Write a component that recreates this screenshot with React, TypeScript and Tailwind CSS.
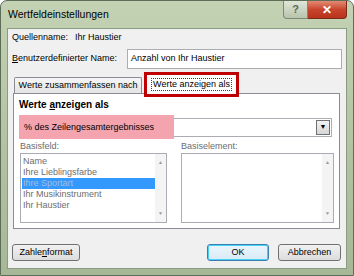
import React from 'react';

const font = { fontFamily: '"Liberation Sans", Arial, sans-serif' };

const ListBox: React.FC<{ items: string[]; selected?: number }> = ({ items, selected }) => (
  <div className="flex h-[70px] border border-[#a9acb2] bg-white">
    <div className="flex-1 pt-[2px] pl-[1px]">
      {items.map((item, i) => (
        <div
          key={item}
          className={`h-[11px] pl-[1px] leading-[11px] ${i === selected ? 'bg-[#3399ff] text-[#a6bdd8]' : 'text-[#6d6d6d]'}`}
        >
          {item}
        </div>
      ))}
    </div>
    <div className="flex w-[11px] flex-col items-center justify-between bg-[#f4f4f4] py-[6px] text-[5px] leading-none text-[#9a9a9a]">
      <span>▲</span>
      <span>▼</span>
    </div>
  </div>
);

const App: React.FC = () => {
  return (
    <div
      className="relative h-[276px] w-[354px] overflow-hidden rounded-t-[7px] border border-[#5d6e57] bg-gradient-to-b from-[#c4d2b4] via-[#b3c3a3] to-[#a7b898] text-[9px] text-black"
      style={font}
    >
      {/* title bar */}
      <div className="flex h-[27px] items-start">
        <div className="pl-[7px] pt-[6px] text-[10.5px] leading-[14px] text-black">Wertfeldeinstellungen</div>
        <div className="ml-auto mr-[6px] flex">
          <div className="flex h-[18px] w-[25px] items-center justify-center rounded-bl-[4px] border border-t-0 border-[#7d8a75] bg-gradient-to-b from-[#dfe6d8] to-[#b8c4ad] text-[11px] font-bold text-[#5a6a52]">
            ?
          </div>
          <div className="flex h-[18px] w-[39px] items-center justify-center rounded-br-[4px] border border-l-0 border-t-0 border-[#7a2a1c] bg-gradient-to-b from-[#e48a74] via-[#c8442c] to-[#b9321c] text-[12px] font-bold text-white">
            ✕
          </div>
        </div>
      </div>

      {/* client area */}
      <div className="mx-[6px] h-[241px] border border-[#8a9b83] bg-[#f0f0f0]">
        <div className="flex h-[18px] items-center pl-[4px]">
          <span className="w-[63px]">Quellenname:</span>
          <span>Ihr Haustier</span>
        </div>
        <div className="mt-[2px] flex h-[20px] items-center pl-[4px] pr-[4px]">
          <span className="w-[115px]">
            <u>B</u>enutzerdefinierter Name:
          </span>
          <div className="flex h-[20px] flex-1 items-center border border-[#abadb3] bg-white pl-[3px]">
            Anzahl von Ihr Haustier
          </div>
        </div>

        {/* tabs */}
        <div className="mt-[6px] flex h-[18px] items-end pl-[6px]">
          <div className="flex h-[16px] w-[128px] items-center justify-center rounded-t-[2px] border border-b-0 border-[#898c95] bg-gradient-to-b from-[#f6f6f6] to-[#e4e4e4]">
            Werte zusammenfassen nach
          </div>
          <div className="relative z-10 -mb-px ml-[4px] flex h-[20px] w-[91px] items-center justify-center border border-b-0 border-[#898c95] bg-white">
            <span className="border border-dotted border-[#444] px-[1px] leading-[11px]">Werte anzeigen als</span>
            <div className="absolute -bottom-[3px] -left-[3px] -right-[3px] -top-[3px] z-20 border-[3px] border-[#c00000]" />
          </div>
        </div>

        {/* tab panel */}
        <div className="ml-[5px] mr-[6px] h-[136px] border border-[#898c95] bg-white pl-[5px] pr-[5px]">
          <div className="h-[18px] pt-[4px] text-[10px] font-bold leading-[14px]">
            Werte <u>a</u>nzeigen als
          </div>
          <div className="relative mr-[2px] mt-[6px] flex h-[19px] items-center border border-[#abadb3] bg-white pl-[4px]">
            <div className="absolute left-[-1px] top-[-4px] h-[24px] w-[155px] bg-[#f4a4ae]" />
            <span className="relative">% des Zeilengesamtergebnisses</span>
            <div className="ml-auto mr-[1px] flex h-[15px] w-[14px] items-center justify-center border border-[#707070] bg-gradient-to-b from-[#f2f2f2] to-[#d6d6d6] text-[7px] text-black">
              ▼
            </div>
          </div>
          <div className="mt-[3px] flex gap-[14px] pl-[1px]">
            <div className="w-[147px]">
              <div className="h-[13px] leading-[13px] text-[#6d6d6d]">Basisfeld:</div>
              <ListBox
                items={['Name', 'Ihre Lieblingsfarbe', 'Ihre Sportart', 'Ihr Musikinstrument', 'Ihr Haustier']}
                selected={2}
              />
            </div>
            <div className="flex-1">
              <div className="h-[13px] leading-[13px] text-[#6d6d6d]">Basiselement:</div>
              <ListBox items={[]} />
            </div>
          </div>
        </div>

        {/* buttons */}
        <div className="mt-[15px] flex items-center pl-[4px] pr-[5px]">
          <div className="flex h-[17px] w-[68px] items-center justify-center rounded-[3px] border border-[#707070] bg-gradient-to-b from-[#f2f2f2] to-[#dcdcdc]">
            Zahle<u>n</u>format
          </div>
          <div className="ml-auto flex h-[17px] w-[62px] items-center justify-center rounded-[3px] border border-[#3c7fb1] bg-gradient-to-b from-[#eaf6fd] to-[#d9eaf5] shadow-[inset_0_0_0_1px_#48d0f5]">
            OK
          </div>
          <div className="ml-[9px] flex h-[17px] w-[63px] items-center justify-center rounded-[3px] border border-[#707070] bg-gradient-to-b from-[#f2f2f2] to-[#dcdcdc]">
            Abbrechen
          </div>
        </div>
      </div>
    </div>
  );
};

export default App;
